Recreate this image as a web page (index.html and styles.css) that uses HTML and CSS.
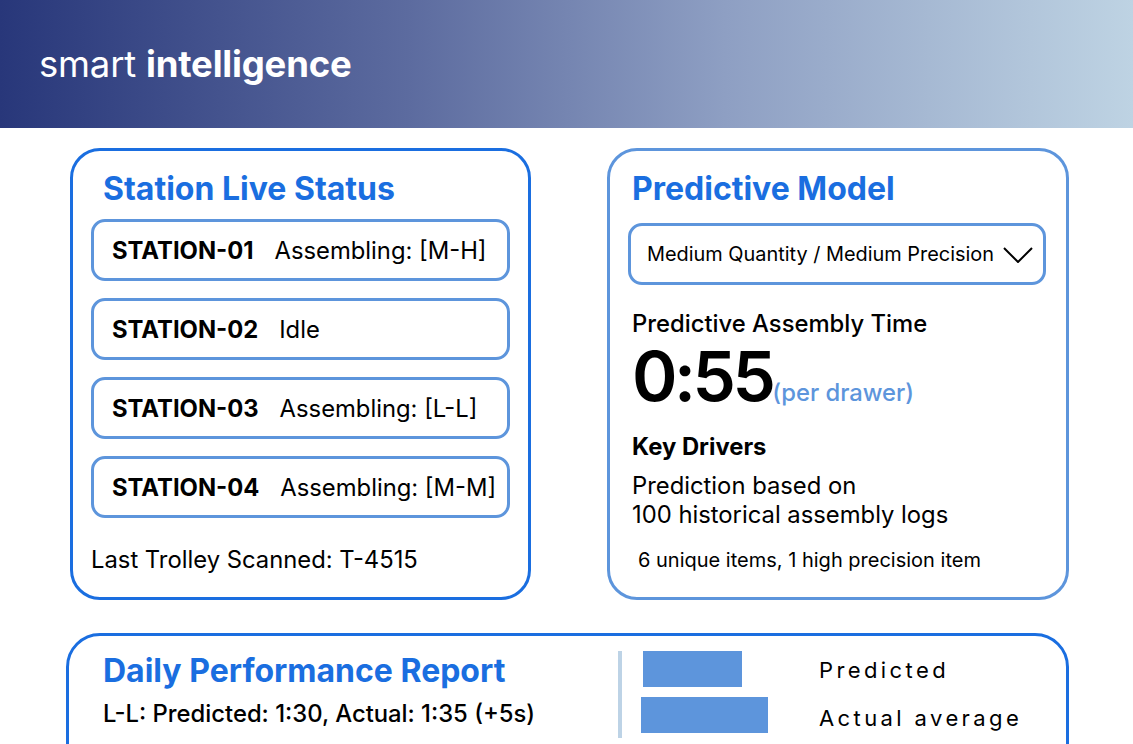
FILE: index.html
```html
<!DOCTYPE html>
<html lang="en">
<head>
<meta charset="utf-8">
<title>smart intelligence</title>
<link rel="stylesheet" href="styles.css">
</head>
<body>
<header class="topbar">
  <div class="brand"><span class="brand-light">smart</span> <span class="brand-bold">intelligence</span></div>
</header>
<main class="main">
  <div class="row">
    <section class="card card-status">
      <h2 class="card-title">Station Live Status</h2>
      <div class="stations">
        <div class="station"><span class="st-name">STATION-01</span><span class="st-state">Assembling: [M-H]</span></div>
        <div class="station"><span class="st-name">STATION-02</span><span class="st-state">Idle</span></div>
        <div class="station"><span class="st-name">STATION-03</span><span class="st-state">Assembling: [L-L]</span></div>
        <div class="station"><span class="st-name">STATION-04</span><span class="st-state">Assembling: [M-M]</span></div>
      </div>
      <p class="last-scan">Last Trolley Scanned: T-4515</p>
    </section>
    <section class="card card-model">
      <h2 class="card-title title-model">Predictive Model</h2>
      <div class="select">
        <span class="select-text">Medium Quantity / Medium Precision</span>
        <svg class="chevron" width="30" height="16" viewBox="0 0 30 16"><polyline points="1,1 15,15 29,1" fill="none" stroke="#000" stroke-width="2"/></svg>
      </div>
      <p class="pat">Predictive Assembly Time</p>
      <div class="bigtime"><span class="big">0:55</span><span class="per">(per drawer)</span></div>
      <h3 class="drivers">Key Drivers</h3>
      <p class="basis">Prediction based on<br>100 historical assembly logs</p>
      <p class="items">6 unique items, 1 high precision item</p>
    </section>
  </div>
  <section class="card card-report">
    <div class="report-left">
      <h2 class="card-title">Daily Performance Report</h2>
      <p class="report-line">L-L: Predicted: 1:30, Actual: 1:35 (+5s)</p>
    </div>
    <div class="legend">
      <div class="legend-rule"></div>
      <div class="legend-grid">
        <div class="bar bar-pred"></div><span class="legend-label lbl-pred">Predicted</span>
        <div class="bar bar-act"></div><span class="legend-label lbl-act">Actual average</span>
      </div>
    </div>
  </section>
</main>
</body>
</html>
```
FILE: styles.css
```css
* { box-sizing: border-box; }
html, body { margin: 0; padding: 0; }
body {
  font-family: Inter, "Noto Sans", "Liberation Sans", sans-serif;
  color: #000;
  background: #fff;
  width: 1133px;
  height: 744px;
  overflow: hidden;
}
p, h2, h3 { margin: 0; }

.topbar {
  height: 128px;
  background: linear-gradient(90deg, #28377a 0%, #5c6b9f 36%, #8e9fc3 64%, #bed3e3 100%);
  display: flex;
  align-items: center;
  padding-left: 39px;
}
.brand {
  color: #fff;
  font-size: 36.5px;
  line-height: 40px;
  letter-spacing: -0.2px;
}
.brand-light { font-weight: 400; }
.brand-bold { font-weight: 700; }

.main { padding-top: 20px; }
.row {
  display: flex;
  gap: 76px;
  padding-left: 70px;
}
.card {
  border-radius: 30px;
  border: 3px solid #1a6ee0;
  background: #fff;
}
.card-title {
  font-size: 32px;
  line-height: 36px;
  font-weight: 700;
  color: #1a6ee0;
}

.card-status {
  width: 461px;
  height: 452px;
  padding: 20px 18px 0 18px;
}
.card-status .card-title { padding-left: 12px; }
.stations {
  margin-top: 12px;
  display: flex;
  flex-direction: column;
  gap: 17px;
}
.station {
  height: 62px;
  border: 3px solid #5d95dc;
  border-radius: 14px;
  display: flex;
  align-items: center;
  padding-left: 18px;
  font-size: 23.8px;
  gap: 21px;
}
.st-name { font-weight: 700; }
.st-state { font-weight: 400; }
.last-scan {
  margin-top: 27px;
  font-size: 23.8px;
  line-height: 30px;
}

.card-model {
  width: 462px;
  height: 452px;
  border-color: #5d95dc;
  padding: 20px 20px 0 18px;
}
.title-model { padding-left: 4px; }
.select {
  margin-top: 16px;
  height: 62px;
  border: 3px solid #5d95dc;
  border-radius: 14px;
  display: flex;
  align-items: center;
  justify-content: space-between;
  padding: 0 10px 0 16px;
  font-size: 19.9px;
}
.chevron { display: block; margin-top: 1px; }
.pat {
  margin-top: 24px;
  padding-left: 4px;
  font-size: 23.8px;
  line-height: 30px;
  font-weight: 500;
}
.bigtime {
  margin-top: 1px;
  padding-left: 4px;
  display: flex;
  align-items: baseline;
  height: 72px;
}
.big {
  font-size: 69px;
  line-height: 72px;
  font-weight: 600;
  letter-spacing: -3.5px;
  margin-right: 0;
}
.per {
  font-size: 23.8px;
  color: #5d95dc;
  font-weight: 500;
}
.drivers {
  margin-top: 20px;
  padding-left: 4px;
  font-size: 23.8px;
  line-height: 30px;
  font-weight: 700;
}
.basis {
  margin-top: 9px;
  padding-left: 4px;
  font-size: 23.8px;
  line-height: 29px;
}
.items {
  margin-top: 18px;
  padding-left: 10px;
  font-size: 20px;
  line-height: 26px;
}

.card-report {
  margin-top: 33px;
  margin-left: 66px;
  width: 1003px;
  height: 160px;
  border-radius: 34px;
  padding: 15px 0 0 34px;
  display: flex;
}
.report-left {
  width: 515px;
  padding-top: 2px;
}
.report-line {
  margin-top: 10px;
  font-size: 23.8px;
  line-height: 30px;
  font-weight: 500;
}
.legend {
  display: flex;
}
.legend-rule {
  width: 4px;
  height: 87px;
  background: #bdd3e6;
}
.legend-grid {
  display: grid;
  grid-template-columns: 178px auto;
  grid-template-rows: 36px 36px;
  row-gap: 10px;
  align-items: center;
  padding-left: 19px;
}
.bar { height: 36px; background: #5d95dc; }
.bar-pred { width: 99px; margin-left: 2px; }
.bar-act { width: 127px; }
.legend-label {
  font-size: 22px;
  letter-spacing: 3.4px;
  line-height: 30px;
}
.lbl-pred { margin-top: 2px; }
.lbl-act { margin-top: 6px; }
```
